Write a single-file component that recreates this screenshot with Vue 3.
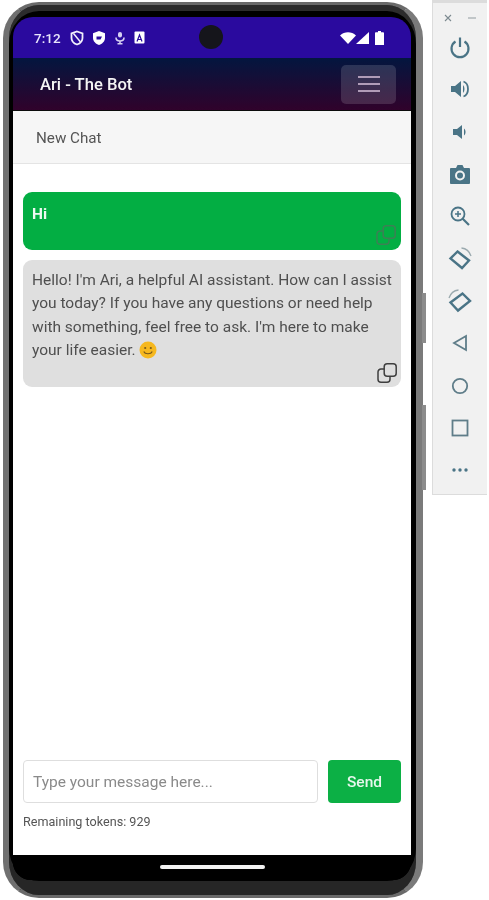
<script setup>
const toolIcons = ['power', 'volup', 'voldown', 'camera', 'zoom', 'rotl', 'rotr', 'back', 'home', 'square', 'more'];
</script>

<template>
  <div class="desktop">
    <div class="phone">
      <span class="side-btn side-power"></span>
      <span class="side-btn side-volume"></span>
      <div class="screen">
        <div class="statusbar">
          <span class="clock">7:12</span>
          <div class="status-icons">
            <svg width="14" height="16" viewBox="0 0 14 16">
              <path d="M7 1.500 12.500 3.500V8C12.500 11 10 13.500 7 14.500 4 13.500 1.500 11 1.500 8V3.500Z" fill="none" stroke="#f1effc" stroke-width="1.800" />
              <path d="M3.500 3.500 10.500 12" stroke="#f1effc" stroke-width="1.500" />
            </svg>
            <svg width="14" height="16" viewBox="0 0 14 16">
              <path d="M7 1 13 3.200V8C13 11.300 10.200 14 7 15 3.800 14 1 11.300 1 8V3.200Z" fill="#fff" />
              <path d="M4.500 6.500H10L8.500 9.500H4.500Z" fill="#2a0a9e" />
            </svg>
            <svg width="12" height="14" viewBox="0 0 12 14">
              <rect x="4" y="1" width="4" height="5.500" rx="2" fill="#d6d0f2" />
              <path d="M2 6.500C2 9 4 10 6 10S10 9 10 6.500M6 10V12.500M3.500 12.700H8.500" fill="none" stroke="#d6d0f2" stroke-width="1.600" />
            </svg>
            <svg width="11" height="13" viewBox="0 0 11 13">
              <rect x="0.500" y="0.500" width="10" height="12" rx="1" fill="#fff" />
              <path d="M3 10.500 5.500 4 8 10.500M4 8.500H7" fill="none" stroke="#2a0a9e" stroke-width="1.200" />
            </svg>
          </div>
          <div class="camera"></div>
          <div class="status-right">
            <svg width="16" height="12" viewBox="0 0 16 12"><path d="M0 3.500C4.500-.7 11.500-.7 16 3.500L8 12Z" fill="#fff" /></svg>
            <svg width="13" height="12" viewBox="0 0 13 12"><path d="M13 0V12H0Z" fill="#fff" /></svg>
            <svg class="battery" width="9" height="14" viewBox="0 0 9 14"><path d="M3 0H6V1.200H8.200C8.600 1.200 9 1.600 9 2V14H0V2C0 1.600.4 1.200.8 1.200H3Z" fill="#fff" /></svg>
          </div>
        </div>

        <div class="navbar">
          <span class="brand">Ari - The Bot</span>
          <button class="toggler" type="button" aria-label="Menu">
            <span></span><span></span><span></span>
          </button>
        </div>

        <div class="menu-row">New Chat</div>

        <div class="chat">
          <div class="messages">
            <div class="msg msg-user">
              <p>Hi</p>
              <svg class="copy copy-user" width="20" height="20" viewBox="0 0 20 20">
                <rect x="7.200" y="0.800" width="12" height="12.400" rx="3" fill="none" stroke="currentColor" stroke-width="1.500" />
                <path d="M7.200 6H4A3 3 0 0 0 1 9V16.200A3 3 0 0 0 4 19.200H10A3 3 0 0 0 13 16.200V13.200" fill="none" stroke="currentColor" stroke-width="1.500" />
              </svg>
            </div>
            <div class="msg msg-bot">
              <p>Hello! I'm Ari, a helpful AI assistant. How can I assist you today? If you have any questions or need help with something, feel free to ask. I'm here to make your life easier.
                <svg class="emoji" width="18" height="18" viewBox="0 0 18 18">
                  <circle cx="9" cy="9" r="8.500" fill="#f6b81f" />
                  <circle cx="6.200" cy="7" r="1.100" fill="#7a5a1a" />
                  <circle cx="11.800" cy="7" r="1.100" fill="#7a5a1a" />
                  <path d="M4.800 10.500C6 13.400 12 13.400 13.200 10.500" fill="none" stroke="#7a5a1a" stroke-width="1.100" />
                </svg>
              </p>
              <svg class="copy" width="20" height="20" viewBox="0 0 20 20">
                <rect x="7.200" y="0.800" width="12" height="12.400" rx="3" fill="none" stroke="currentColor" stroke-width="1.500" />
                <path d="M7.200 6H4A3 3 0 0 0 1 9V16.200A3 3 0 0 0 4 19.200H10A3 3 0 0 0 13 16.200V13.200" fill="none" stroke="currentColor" stroke-width="1.500" />
              </svg>
            </div>
          </div>

          <div class="composer">
            <input class="input" type="text" placeholder="Type your message here..." />
            <button class="send" type="button">Send</button>
          </div>
          <div class="tokens">Remaining tokens: 929</div>
        </div>

        <div class="navstrip"><span class="home-pill"></span></div>
      </div>
    </div>

    <div class="toolbar">
      <div class="win-btns">
        <svg width="8" height="8" viewBox="0 0 8 8"><path d="M1 1 7 7M7 1 1 7" stroke="#7d8a90" stroke-width="1.100" /></svg>
        <svg width="8" height="8" viewBox="0 0 8 8"><path d="M0 4H8" stroke="#9aa3a7" stroke-width="1.100" /></svg>
      </div>
      <div v-for="icon in toolIcons" :key="icon" class="tool">
        <svg width="24" height="24" viewBox="0 0 24 24" class="tool-icon">
          <template v-if="icon === 'power'">
            <path d="M7.500 6.500A8.500 8.500 0 1 0 16.500 6.500" fill="none" stroke="currentColor" stroke-width="2.200" />
            <path d="M12 2.500V12" stroke="currentColor" stroke-width="2.200" />
          </template>
          <template v-else-if="icon === 'volup'">
            <path d="M3 9H7L13 4V20L7 15H3Z" fill="currentColor" />
            <path d="M15 8C17 10 17 14 15 16V8Z" fill="currentColor" />
            <path d="M15.500 4.500C21.500 6.500 21.500 17.500 15.500 19.500" fill="none" stroke="currentColor" stroke-width="1.800" />
          </template>
          <template v-else-if="icon === 'voldown'">
            <path d="M5 9H9L14 5V19L9 15H5Z" fill="currentColor" />
            <path d="M16 8.500C18 10 18 14 16 15.500Z" fill="currentColor" />
          </template>
          <template v-else-if="icon === 'camera'">
            <path d="M3 6H8L9.500 3H14.500L16 6H21C21.500 6 22 6.500 22 7V21C22 21.500 21.500 22 21 22H3C2.500 22 2 21.500 2 21V7C2 6.500 2.500 6 3 6Z" fill="currentColor" />
            <circle cx="12" cy="13.500" r="4" fill="none" stroke="#f1f1f1" stroke-width="2" />
          </template>
          <template v-else-if="icon === 'zoom'">
            <circle cx="10" cy="10" r="6.500" fill="none" stroke="currentColor" stroke-width="1.800" />
            <path d="M14.500 14.500 21 21" stroke="currentColor" stroke-width="2.200" />
            <path d="M7 10H13M10 7V13" stroke="currentColor" stroke-width="1.500" />
          </template>
          <template v-else-if="icon === 'rotl'">
            <path d="M9.500 4.500 21 13.500 14 21 2.500 11.500Z" fill="none" stroke="currentColor" stroke-width="2.400" />
            <path d="M13.500 1C18 1.500 21.500 4.500 23 9" fill="none" stroke="#9aa9ae" stroke-width="1.300" />
          </template>
          <template v-else-if="icon === 'rotr'">
            <path d="M14.500 4.500 22 12 10 21.500 2.500 13.500Z" fill="none" stroke="currentColor" stroke-width="2.400" />
            <path d="M10.500 1C6 1.500 2.500 4.500 1 9" fill="none" stroke="#9aa9ae" stroke-width="1.300" />
          </template>
          <path v-else-if="icon === 'back'" d="M18 5V19L6 12Z" fill="none" stroke="#5f7d89" stroke-width="1.800" />
          <circle v-else-if="icon === 'home'" cx="12" cy="12" r="7.200" fill="none" stroke="#5f7d89" stroke-width="1.800" />
          <rect v-else-if="icon === 'square'" x="4.500" y="4.500" width="15" height="15" fill="none" stroke="#5f7d89" stroke-width="1.800" />
          <template v-else>
            <circle cx="6" cy="12" r="1.700" fill="currentColor" />
            <circle cx="12" cy="12" r="1.700" fill="currentColor" />
            <circle cx="18" cy="12" r="1.700" fill="currentColor" />
          </template>
        </svg>
      </div>
    </div>
  </div>
</template>

<style scoped>
.desktop { display: flex; align-items: flex-start; width: 489px; height: 900px; background: #fff; overflow: hidden; font-family: Roboto, "Liberation Sans", sans-serif; filter: blur(0.5px); }

.phone { position: relative; width: 420px; height: 896px; margin: 2px 0 0 3px; padding: 12px 5px 15px 4px; box-sizing: border-box; background: #000; border-style: solid; border-color: #6a6a6a #7a7a7a #6a6a6a #707070; border-width: 3px 7px 3px 6px; border-radius: 36px; box-shadow: inset 0 6px 0 #2c2c2c, inset 0 -14px 0 #262626; flex-shrink: 0; }
.side-btn { position: absolute; right: -10px; width: 4px; background: #8c8c8c; }
.side-power { top: 288px; height: 50px; }
.side-volume { top: 400px; height: 85px; }
.screen { height: 863px; display: flex; flex-direction: column; background: #000; border-radius: 20px 20px 18px 18px; overflow: hidden; }

.statusbar { height: 41px; flex-shrink: 0; display: flex; align-items: center; padding: 0 27px 0 21px; background: #2a0a9e; color: #fff; position: relative; }
.clock { font-size: 13.500px; font-weight: 500; color: #e8e6fb; }
.status-icons { display: flex; align-items: center; gap: 8px; margin-left: 9px; }
.status-right { display: flex; align-items: center; margin-left: auto; }
.battery { margin-left: 6px; }
.camera { position: absolute; left: 186px; top: 8px; width: 24px; height: 24px; border-radius: 50%; background: #15151b; }

.navbar { height: 52px; flex-shrink: 0; display: flex; align-items: center; justify-content: space-between; padding: 0 15px 0 27px; background: linear-gradient(180deg, #03163f 0%, #30022b 100%); border-bottom: 1px solid #0c0c0c; }
.brand { color: #f4f4f4; font-size: 16.600px; font-weight: 500; }
.toggler { width: 55px; height: 39px; padding: 0; display: flex; flex-direction: column; align-items: center; justify-content: center; gap: 5px; background: rgba(255, 255, 255, 0.14); border: none; border-radius: 5px; }
.toggler span { display: block; width: 22px; height: 2px; background: #b09cb8; }

.menu-row { height: 53px; flex-shrink: 0; display: flex; align-items: center; padding: 2px 0 0 23px; box-sizing: border-box; background: #f6f6f6; border-bottom: 1px solid #e4e4e4; color: #555; font-size: 15.200px; }

.chat { flex: 1; min-height: 0; display: flex; flex-direction: column; padding: 28px 10px 26px; background: #fff; }
.messages { flex: 1; display: flex; flex-direction: column; gap: 10px; }
.msg { position: relative; border-radius: 9px; padding: 11px 9px; box-sizing: border-box; font-size: 15.500px; line-height: 23.300px; }
.msg p { margin: 0; }
.msg-user { height: 58px; background: #03ae43; color: #eef9f2; font-weight: 700; }
.msg-bot { height: 127px; padding-top: 9px; background: #dfdfdf; color: #4f4f4f; }
.emoji { vertical-align: -4px; }
.copy { position: absolute; right: 4px; bottom: 4px; color: #3f3f3f; }
.copy-user { right: 5px; bottom: 5px; color: #3d8055; }

.composer { display: flex; gap: 10px; }
.input { flex: 1; min-width: 0; height: 43px; padding: 0 9px; box-sizing: border-box; background: #fff; border: 1px solid #dedede; border-radius: 4px; font: 15.500px Roboto, "Liberation Sans", sans-serif; }
.input::placeholder { color: #8a8a8a; opacity: 1; }
.send { width: 73px; height: 43px; padding: 0; background: #0cb045; border: none; border-radius: 4px; color: #e6f7ec; font: 500 15.500px Roboto, "Liberation Sans", sans-serif; }
.tokens { margin-top: 12px; font-size: 12.600px; line-height: 14px; color: #555; }

.navstrip { height: 25px; flex-shrink: 0; display: flex; justify-content: center; padding-top: 10px; box-sizing: border-box; background: #000; }
.home-pill { width: 105px; height: 4px; border-radius: 2px; background: #f2f2f2; }

.toolbar { width: 55px; height: 495px; margin-left: 9px; flex-shrink: 0; padding-top: 9px; box-sizing: border-box; background: #f1f1f1; border-left: 1px solid #dcdcdc; border-bottom: 1px solid #dcdcdc; border-top: 3px solid #dcdcdc; display: flex; flex-direction: column; align-items: center; }
.win-btns { display: flex; gap: 16px; height: 12px; align-items: center; margin-bottom: 2px; }
.tool { height: 42.300px; display: flex; align-items: center; justify-content: center; flex-shrink: 0; }
.tool-icon { color: #4a7486; }
</style>

<style>
html, body { margin: 0; background: #fff; }
</style>
